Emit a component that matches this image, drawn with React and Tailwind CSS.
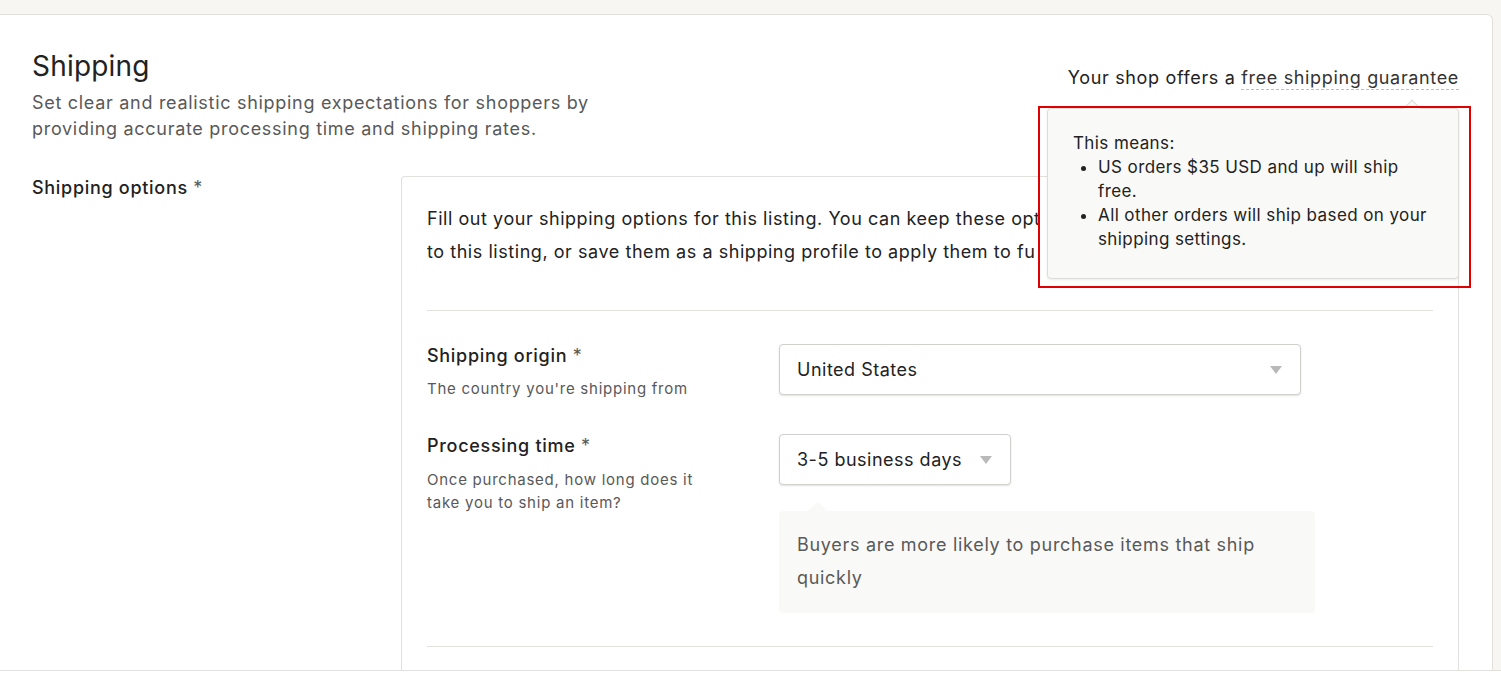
import React from 'react'

const FONT = { fontFamily: 'Inter, "Noto Sans", sans-serif' }

/** Grey downward caret used inside the select boxes */
function Caret() {
  return (
    <svg width="12" height="8" viewBox="0 0 12 8" className="shrink-0">
      <path d="M0 0h12L6 8z" fill="#b9b9b9" />
    </svg>
  )
}

function SelectBox({ value, wide }) {
  return (
    <div
      className={`flex h-[51px] items-center justify-between gap-[18px] rounded-[4px] border border-[#d0d0cd] bg-white pl-[17px] pr-[18px] shadow-[0_1px_2px_rgba(0,0,0,0.12)] ${
        wide ? 'w-[522px]' : 'w-fit'
      }`}
    >
      <span className="text-[18px] tracking-[0.5px] text-[#222]">{value}</span>
      <Caret />
    </div>
  )
}

function Label({ children }) {
  return (
    <div className="text-[18px] font-medium leading-6 tracking-[0.7px] text-[#222]">
      {children} <span className="font-normal text-[#595959]">*</span>
    </div>
  )
}

export default function App() {
  return (
    <div style={FONT} className="flex h-[683px] w-[1501px] flex-col overflow-hidden bg-[#f7f6f3] text-[#222]">
      <div className="h-[14px] shrink-0" />

      <div className="flex min-h-0 flex-1">
        {/* main card */}
        <div className="flex min-w-0 flex-1 flex-col overflow-hidden rounded-tr-[6px] border-r border-t border-[#e1e0dc] bg-white pl-8 pr-[33px]">
          {/* header */}
          <div className="flex items-start justify-between pt-[33px]">
            <div>
              <h1 className="text-[28px] font-normal leading-9 tracking-[0.2px] text-[#222]">Shipping</h1>
              <p className="mt-[6px] w-[600px] text-[18px] leading-[26px] tracking-[0.7px] text-[#595959]">
                Set clear and realistic shipping expectations for shoppers by providing accurate processing time and
                shipping rates.
              </p>
            </div>

            <div className="relative z-10 mt-[17px]">
              <span className="text-[18px] leading-[26px] tracking-[0.65px] text-[#222]">
                Your shop offers a{' '}
                <span className="border-b border-dashed border-[#bdbdbd] pb-[1px] text-[#333]">
                  free shipping guarantee
                </span>
              </span>

              {/* tooltip */}
              <div className="absolute right-0 top-[43px] w-[412px] rounded-[4px] border border-[#dcdcd8] bg-[#f9f9f7] pb-[27px] pl-[25px] pr-[20px] pt-[22px] text-[17px] leading-6 tracking-[0.4px] text-[#222] shadow-[0_1px_3px_rgba(0,0,0,0.08)]">
                <div className="absolute -top-[7px] right-[40px] h-3 w-3 rotate-45 border-l border-t border-[#dcdcd8] bg-[#f9f9f7]" />
                <p>This means:</p>
                <ul className="list-disc pl-[25px]">
                  <li>
                    US orders $35 USD and up will ship
                    <br />
                    free.
                  </li>
                  <li>
                    All other orders will ship based on your
                    <br />
                    shipping settings.
                  </li>
                </ul>
              </div>

              {/* annotation frame */}
              <div className="pointer-events-none absolute -right-[12px] top-[41px] h-[182px] w-[433px] border-2 border-[#e00000]" />
            </div>
          </div>

          {/* shipping options */}
          <div className="mt-[34px] flex min-h-0 flex-1">
            <div className="w-[369px] shrink-0">
              <Label>Shipping options</Label>
            </div>

            <div className="flex-1 rounded-tl-[4px] border-l border-r border-t border-[#e1e0dc] pl-[25px] pr-[25px] pt-[25px]">
              <p className="w-[620px] overflow-hidden whitespace-nowrap text-[18px] leading-[33px] tracking-[0.55px] text-[#222]">
                Fill out your shipping options for this listing. You can keep these opt
                <br />
                to this listing, or save them as a shipping profile to apply them to fu
              </p>

              <div className="mt-[42px] border-t border-[#e1e0dc]" />

              <div className="grid grid-cols-[352px_1fr] pt-[33px]">
                <div>
                  <Label>Shipping origin</Label>
                  <p className="mt-[9px] text-[15px] leading-[23px] tracking-[0.75px] text-[#595959]">
                    The country you're shipping from
                  </p>
                </div>
                <div>
                  <SelectBox value="United States" wide />
                </div>

                <div className="pt-[34px]">
                  <Label>Processing time</Label>
                  <p className="mt-[10px] w-[290px] text-[15px] leading-[23px] tracking-[0.75px] text-[#595959]">
                    Once purchased, how long does it take you to ship an item?
                  </p>
                </div>
                <div className="pt-[34px]">
                  <SelectBox value="3-5 business days" />
                  <div className="relative mt-[26px] w-[536px] rounded-[4px] bg-[#f9f9f7] px-[18px] pb-[19px] pt-[17px]">
                    <div className="absolute -top-[9px] left-[29px] h-0 w-0 border-x-[10px] border-b-[9px] border-x-transparent border-b-[#f9f9f7]" />
                    <p className="text-[18px] leading-[33px] tracking-[0.7px] text-[#595959]">
                      Buyers are more likely to purchase items that ship quickly
                    </p>
                  </div>
                </div>
              </div>

              <div className="mt-[33px] border-t border-[#e1e0dc]" />
            </div>
          </div>
        </div>

        <div className="w-[8px] shrink-0" />
      </div>

      <div className="h-[13px] shrink-0 border-t border-[#e1e0dc] bg-white" />
    </div>
  )
}
